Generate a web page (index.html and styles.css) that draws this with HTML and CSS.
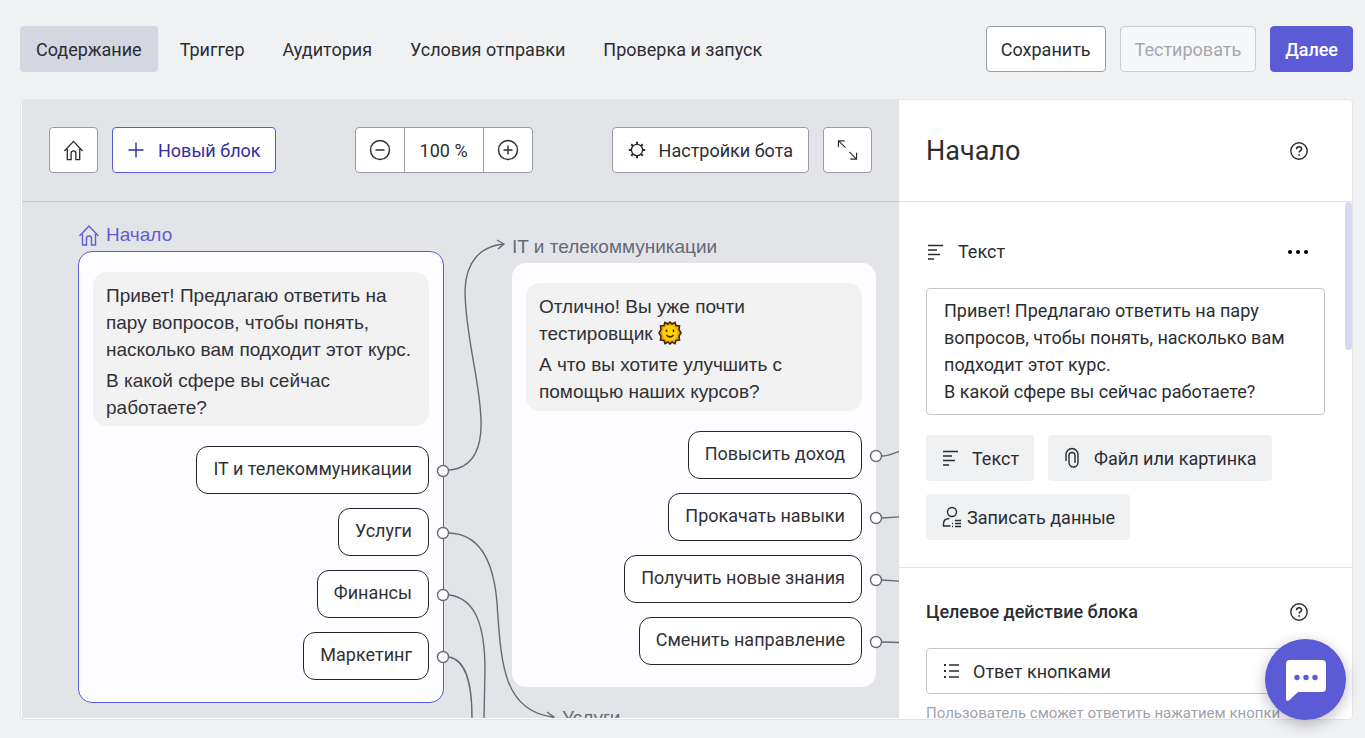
FILE: index.html
```html
<!DOCTYPE html>
<html lang="ru">
<head>
<meta charset="utf-8">
<title>Редактор чат-бота</title>
<link rel="stylesheet" href="styles.css">
</head>
<body>
<svg class="sprite" aria-hidden="true">
  <symbol id="home" viewBox="0 0 22 22"><path d="M1.500 12 11 2l9.500 10M4.500 10v11h4v-6.500a2.500 2.500 0 0 1 5 0V21h4V10"/></symbol>
  <symbol id="lines" viewBox="0 0 18 18"><path d="M2 2.500h15M2 7h9M2 11.500h12M2 16h6"/></symbol>
  <symbol id="help" viewBox="0 0 20 20"><circle cx="10" cy="10" r="8.200"/><path d="M7.600 8.200c0-3.200 5-3.200 5-.3 0 1.800-2.500 1.700-2.500 3.700M10.100 13.300v1.500" stroke-width="1.600"/></symbol>
</svg>

<header class="topbar">
  <nav class="tabs">
    <a class="tab tab-active" href="#content">Содержание</a>
    <a class="tab" href="#trigger">Триггер</a>
    <a class="tab" href="#audience">Аудитория</a>
    <a class="tab" href="#conditions">Условия отправки</a>
    <a class="tab" href="#launch">Проверка и запуск</a>
  </nav>
  <div class="actions">
    <button class="btn">Сохранить</button>
    <button class="btn" disabled>Тестировать</button>
    <button class="btn btn-primary">Далее</button>
  </div>
</header>

<main class="editor">
  <section class="workspace">
    <div class="toolbar">
      <div class="group">
        <button class="btn btn-icon" aria-label="К началу"><svg class="icon icon-l"><use href="#home"/></svg></button>
        <button class="btn btn-new"><svg class="icon" viewBox="0 0 18 18"><path d="M9 1.500v15M1.500 9h15"/></svg>Новый блок</button>
      </div>
      <div class="zoom">
        <button class="zoom-btn" aria-label="Уменьшить"><svg class="icon icon-l" viewBox="0 0 22 22"><circle cx="11" cy="11" r="9.500"/><path d="M6.500 11h9"/></svg></button>
        <output class="zoom-value">100 %</output>
        <button class="zoom-btn" aria-label="Увеличить"><svg class="icon icon-l" viewBox="0 0 22 22"><circle cx="11" cy="11" r="9.500"/><path d="M6.500 11h9M11 6.500v9"/></svg></button>
      </div>
      <div class="group">
        <button class="btn btn-settings"><svg class="icon" viewBox="0 0 18 18"><circle cx="9" cy="9" r="5.600"/><path d="M9 .8v2.600M9 14.600v2.600M.8 9h2.600M14.600 9h2.600M3.200 3.200 5 5M13 13l1.800 1.800M14.800 3.200 13 5M5 13l-1.800 1.800" stroke-width="2"/></svg>Настройки бота</button>
        <button class="btn btn-icon" aria-label="На весь экран"><svg class="icon icon-l icon-thin" viewBox="0 0 22 22"><path d="m1.500 1.500 7.500 7M1.500 8V1.500H8M13 13l7.500 7.500M20.500 14v6.500H14"/></svg></button>
      </div>
    </div>

    <div class="canvas">
      <div class="node node-start">
        <div class="node-title"><svg class="icon icon-l"><use href="#home"/></svg>Начало</div>
        <div class="card card-selected">
          <div class="bubble">
            <p>Привет! Предлагаю ответить на пару вопросов, чтобы понять, насколько вам подходит этот курс.</p>
            <p>В какой сфере вы сейчас работаете?</p>
          </div>
          <button class="reply">IT и телекоммуникации</button>
          <button class="reply">Услуги</button>
          <button class="reply">Финансы</button>
          <button class="reply">Маркетинг</button>
        </div>
      </div>

      <div class="node node-it">
        <div class="node-title">IT и телекоммуникации</div>
        <div class="card">
          <div class="bubble">
            <p>Отлично! Вы уже почти тестировщик <svg class="sun" viewBox="0 0 24 24" role="img" aria-label="Солнце"><path d="m12 1 2 2 3-1.500 1 3 3.500.5-.5 3.500L23 12l-2 3 .5 4-3.500.5-1 3-3-1.500-2 2-2-2-3 1.500-1-3-3.500-.5.5-4L1 12l2-3.500L2.500 5 6 4.500l1-3L10 3z" fill="#f2a80c" stroke="#43240c" stroke-width="1.600"/><circle cx="12" cy="12" r="7.500" fill="#ffd400"/><path d="M8.500 8.500v2.500M15.500 8.500v2.500M8.500 14c2 2.500 5 2.500 7 0" fill="none" stroke="#43240c" stroke-width="1.600"/></svg></p>
            <p>А что вы хотите улучшить с помощью наших курсов?</p>
          </div>
          <button class="reply">Повысить доход</button>
          <button class="reply">Прокачать навыки</button>
          <button class="reply">Получить новые знания</button>
          <button class="reply">Сменить направление</button>
        </div>
      </div>

      <div class="node node-services">
        <div class="node-title">Услуги</div>
      </div>

      <svg class="links" aria-hidden="true">
        <path d="M427 268C453 266 460 243 459 218C458 178 443 133 443 88C444 60 458 44 482 42"/>
        <path d="M475 38l7 4-6 5"/>
        <path d="M427 331C460 332 472 363 475 401C479 458 480 509 531 515"/>
        <path d="M525 510l7 5-7 4"/>
        <path d="M427 393C453 396 463 423 463 468L462 516"/>
        <path d="M427 455C443 458 450 478 450 516"/>
        <path d="M860 254C868 254 872 250 890 246M860 316l30-2M860 378l30 2M860 440l30 1"/>
        <g class="ports">
          <circle cx="421" cy="269" r="5.500"/><circle cx="421" cy="331" r="5.500"/><circle cx="421" cy="393" r="5.500"/><circle cx="421" cy="455" r="5.500"/>
          <circle cx="854" cy="254" r="5.500"/><circle cx="854" cy="316" r="5.500"/><circle cx="854" cy="378" r="5.500"/><circle cx="854" cy="440" r="5.500"/>
        </g>
      </svg>
    </div>
  </section>

  <aside class="side">
    <div class="side-head">
      <h1 class="side-title">Начало</h1>
      <button class="ghost" aria-label="Справка"><svg class="icon icon-m"><use href="#help"/></svg></button>
    </div>
    <div class="side-body">
      <section class="section">
        <div class="row">
          <label class="row-label" for="message"><svg class="icon"><use href="#lines"/></svg>Текст</label>
          <button class="ghost" aria-label="Действия"><svg class="dots" viewBox="0 0 22 6"><circle cx="3" cy="3" r="2"/><circle cx="11" cy="3" r="2"/><circle cx="19" cy="3" r="2"/></svg></button>
        </div>
        <textarea class="message" id="message" rows="4">Привет! Предлагаю ответить на пару вопросов, чтобы понять, насколько вам подходит этот курс.
В какой сфере вы сейчас работаете?</textarea>
        <div class="adders">
          <button class="adder"><svg class="icon"><use href="#lines"/></svg>Текст</button>
          <button class="adder"><svg class="icon icon-clip" viewBox="0 0 18 22"><path d="M3 14V7.500a6 6 0 0 1 12 0v8a4.500 4.500 0 0 1-9 0V8.500a3 3 0 0 1 6 0V16"/></svg>Файл или картинка</button>
          <button class="adder adder-data"><svg class="icon icon-l" viewBox="0 0 22 22"><circle cx="11" cy="6" r="4.500"/><path d="M9.500 20H2.500v-2c0-3.500 2-5.500 6-5.500M14 14.500h6M14 17.500h6M14 20.500h6M11 17.500h1M11 20.500h1"/></svg>Записать данные</button>
        </div>
      </section>
      <section class="section section-goal">
        <div class="row">
          <h2 class="goal-title"><label for="goal">Целевое действие блока</label></h2>
          <button class="ghost" aria-label="Справка"><svg class="icon icon-m"><use href="#help"/></svg></button>
        </div>
        <div class="select-box">
          <svg class="icon" viewBox="0 0 18 18"><path d="M7 3h10M7 9h10M7 15h10"/><path d="M2 3h2M2 9h2M2 15h2" stroke-width="2"/></svg>
          <select class="select" id="goal"><option>Ответ кнопками</option></select>
        </div>
        <p class="hint">Пользователь сможет ответить нажатием кнопки</p>
      </section>
      <div class="scroll-thumb"></div>
    </div>
  </aside>
</main>

<button class="chat" aria-label="Чат поддержки"><svg class="chat-icon" viewBox="0 0 42 42"><path d="M5 1h32a4 4 0 0 1 4 4v24a4 4 0 0 1-4 4H13l-8.500 8C3 42.300 1 42 1 40V5a4 4 0 0 1 4-4z" fill="#fff"/><g fill="#5c5bd6"><circle cx="12" cy="18.500" r="2.700"/><circle cx="21" cy="18.500" r="2.700"/><circle cx="30" cy="18.500" r="2.700"/></g></svg></button>
</body>
</html>
```
FILE: styles.css
```css
* { box-sizing: border-box; }

body {
  display: flex;
  flex-direction: column;
  height: 100vh;
  margin: 0;
  padding: 26px 12px 18px 20px;
  overflow: hidden;
  background: #f0f1f3;
  color: #2b2d32;
  font: 18px/27px Roboto, "Liberation Sans", sans-serif;
}

button, textarea, select { font: inherit; color: inherit; }
button { cursor: pointer; }
h1, h2, p { margin: 0; }

.sprite { display: none; }

.icon {
  flex: none;
  width: 18px;
  height: 18px;
  fill: none;
  stroke: currentColor;
  stroke-width: 1.4;
}
.icon-m { width: 20px; height: 20px; }
.icon-l { width: 22px; height: 22px; }
.icon-clip { height: 22px; }
.icon-thin { stroke-width: 1.2; }

/* Top bar */
.topbar {
  display: flex;
  justify-content: space-between;
  margin-bottom: 27px;
}
.tabs { display: flex; gap: 6px; }
.tab {
  padding: 10px 16px 9px;
  border-radius: 4px;
  color: inherit;
  text-decoration: none;
  white-space: nowrap;
}
.tab-active { background: #d5d7e0; }
.actions { display: flex; gap: 14px; }

.btn {
  display: flex;
  align-items: center;
  height: 46px;
  padding: 0 14px;
  border: 1px solid #9a9da8;
  border-radius: 4px;
  background: #fff;
  white-space: nowrap;
}
.btn:disabled {
  border-color: #c9ccd4;
  background: #f6f7f9;
  color: #a5a7ad;
}
.btn-primary {
  border-color: #5c5bd6;
  background: #5c5bd6;
  color: #fff;
  font-weight: 500;
}
.btn-icon { padding: 0 13px; }
.btn-icon .icon { width: 21px; }
.btn-new {
  gap: 13px;
  padding: 0 14px;
  border-color: #5c5bd6;
  color: #332da0;
}
.btn-settings { gap: 13px; padding: 0 15px; }

/* Editor */
.editor {
  display: flex;
  flex: 1;
  min-height: 0;
  border: 1px solid #e4e5e9;
  border-radius: 4px;
  background: #fff;
  overflow: hidden;
}
.workspace {
  display: flex;
  flex: 1;
  flex-direction: column;
  min-width: 0;
  margin: 0 0 1px 1px;
  background: #e3e4e8;
}
.toolbar {
  display: flex;
  justify-content: space-between;
  padding: 27px 27px 28px;
  border-bottom: 1px solid #c6c8ce;
}
.group { display: flex; gap: 14px; }
.zoom {
  display: flex;
  height: 46px;
  border: 1px solid #9a9da8;
  border-radius: 4px;
  background: #fff;
}
.zoom-btn {
  display: flex;
  align-items: center;
  padding: 0 13px;
  border: 0;
  background: none;
}
.zoom-value {
  padding: 9px 15px;
  border: solid #9a9da8;
  border-width: 0 1px;
}

/* Canvas */
.canvas {
  position: relative;
  flex: 1;
  min-height: 0;
  overflow: hidden;
}
.node {
  position: absolute;
  font-family: "Liberation Sans", Arial, sans-serif;
  font-size: 19px;
}
.node-start { left: 56px; top: 19px; width: 366px; color: #5f5ed0; }
.node-it { left: 490px; top: 31px; width: 364px; color: #666a77; }
.node-services { left: 540px; top: 502px; color: #666a77; }
.node-title {
  display: flex;
  align-items: center;
  gap: 6px;
  padding-bottom: 3px;
}
.card {
  display: flex;
  flex-direction: column;
  align-items: flex-end;
  gap: 14px;
  padding: 20px 14px 22px;
  border-radius: 14px;
  background: #fdfdff;
  color: #303136;
}
.card-selected {
  border: 1px solid #5c5bd6;
}
.bubble {
  align-self: stretch;
  margin-bottom: 6px;
  padding: 10px 13px 6px;
  border-radius: 14px;
  background: #f2f2f3;
}
.card-selected .bubble { padding-bottom: 5px; }
.bubble p + p { margin-top: 4px; }
.sun { width: 24px; height: 24px; vertical-align: -5px; }
.reply {
  height: 48px;
  padding: 0 16px 4px;
  border: 1px solid #24252a;
  border-radius: 12px;
  background: #fff;
  font-family: Roboto, "Liberation Sans", sans-serif;
  font-size: 18px;
}
.links {
  position: absolute;
  inset: 0;
  width: 100%;
  height: 100%;
  fill: none;
  stroke: #666a77;
  stroke-width: 1.4;
  pointer-events: none;
}
.ports { fill: #fff; }

/* Side panel */
.side {
  display: flex;
  flex-direction: column;
  width: 453px;
}
.side-head {
  display: flex;
  align-items: center;
  justify-content: space-between;
  height: 102px;
  padding: 0 43px 0 27px;
  border-bottom: 1px solid #e3e4e8;
}
.side-title { font-size: 27px; font-weight: 400; line-height: 40px; }
.side-body {
  position: relative;
  flex: 1;
  min-height: 0;
  overflow: hidden;
}
.section { padding: 36px 27px 27px; }
.section-goal { padding-top: 30px; border-top: 1px solid #e3e4e8; }
.row {
  display: flex;
  align-items: center;
  justify-content: space-between;
  height: 27px;
  padding-right: 16px;
  margin-bottom: 23px;
}
.row-label { display: flex; align-items: center; gap: 14px; }
.ghost {
  display: flex;
  padding: 0;
  border: 0;
  background: none;
}
.dots { width: 22px; height: 6px; }
.message {
  display: block;
  width: 100%;
  height: 127px;
  padding: 8px 17px;
  border: 1px solid #c6c8ce;
  border-radius: 4px;
  background: #fff;
  resize: none;
  overflow: hidden;
}
.adders {
  display: flex;
  flex-wrap: wrap;
  gap: 13px 14px;
  padding-top: 20px;
}
.adder {
  display: flex;
  align-items: center;
  gap: 13px;
  height: 46px;
  padding: 0 15px;
  border: 0;
  border-radius: 4px;
  background: #f0f1f3;
}
.adder-data { gap: 4px; }
.goal-title { font-size: 18px; font-weight: 500; }
.select-box {
  display: flex;
  align-items: center;
  gap: 13px;
  height: 46px;
  padding: 0 15px;
  border: 1px solid #c6c8ce;
  border-radius: 4px;
}
.select {
  flex: 1;
  padding: 0;
  border: 0;
  background: none;
  appearance: none;
}
.hint {
  margin-top: 6px;
  color: #a0a3ac;
  font-size: 15px;
  white-space: nowrap;
}
.scroll-thumb {
  position: absolute;
  top: 0;
  right: 0;
  width: 7px;
  height: 148px;
  border-radius: 4px;
  background: #d9d8f6;
}

/* Support chat launcher */
.chat {
  position: fixed;
  right: 19px;
  bottom: 18px;
  display: grid;
  place-items: center;
  width: 81px;
  height: 81px;
  padding: 0;
  border: 0;
  border-radius: 50%;
  background: #5c5bd6;
  box-shadow: 0 4px 14px rgba(30, 30, 60, .3);
}
.chat-icon { width: 42px; height: 42px; }
```
